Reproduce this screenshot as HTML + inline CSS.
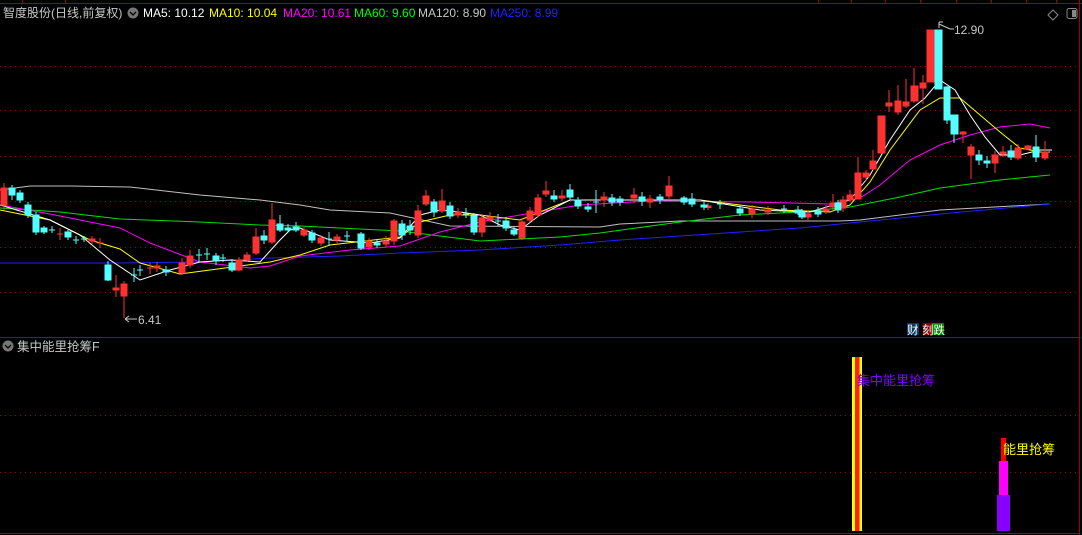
<!DOCTYPE html>
<html><head><meta charset="utf-8"><style>
html,body{margin:0;padding:0;background:#000;width:1082px;height:535px;overflow:hidden}
svg{display:block}
text{font-family:"Liberation Sans","Noto Sans CJK SC",sans-serif}
</style></head><body>
<svg width="1082" height="535" viewBox="0 0 1082 535" xmlns="http://www.w3.org/2000/svg">
<g stroke="#a00000" stroke-width="1" fill="none">
<line x1="0" y1="3.5" x2="1082" y2="3.5"/>
<line x1="1079.5" y1="0" x2="1079.5" y2="535"/>
<line x1="0" y1="337.5" x2="1080" y2="337.5"/>
<line x1="0" y1="533.5" x2="1080" y2="533.5"/>
<line x1="22.5" y1="0" x2="22.5" y2="3"/><line x1="65.5" y1="0" x2="65.5" y2="3"/>
<line x1="818.5" y1="0" x2="818.5" y2="3"/><line x1="851.5" y1="0" x2="851.5" y2="3"/><line x1="885.5" y1="0" x2="885.5" y2="3"/><line x1="920.5" y1="0" x2="920.5" y2="3"/><line x1="956.5" y1="0" x2="956.5" y2="3"/><line x1="991.5" y1="0" x2="991.5" y2="3"/><line x1="1026.5" y1="0" x2="1026.5" y2="3"/><line x1="1056.5" y1="0" x2="1056.5" y2="3"/>
</g>
<g stroke="#a00000" stroke-width="1" stroke-dasharray="1,4" fill="none">
<line x1="0" y1="66.5" x2="1078" y2="66.5"/>
<line x1="0" y1="110.5" x2="1078" y2="110.5"/>
<line x1="0" y1="156.5" x2="1078" y2="156.5"/>
<line x1="0" y1="201.5" x2="1078" y2="201.5"/>
<line x1="0" y1="247.5" x2="1078" y2="247.5"/>
<line x1="0" y1="292.5" x2="1078" y2="292.5"/>
<line x1="0" y1="415.5" x2="1078" y2="415.5"/>
<line x1="0" y1="472.5" x2="1078" y2="472.5"/>
</g>
<!-- header -->
<text x="3" y="17" font-size="12" fill="#c8c8c8">智度股份(日线,前复权)</text>
<circle cx="133" cy="13" r="5.5" fill="#777"/>
<path d="M130 12 L133 15 L136 12" stroke="#000" stroke-width="1.3" fill="none"/>
<text x="143" y="17" font-size="12" fill="#fff">MA5: 10.12</text>
<text x="209" y="17" font-size="12" fill="#ffff00">MA10: 10.04</text>
<text x="283" y="17" font-size="12" fill="#ff00ff">MA20: 10.61</text>
<text x="354" y="17" font-size="12" fill="#00ff00">MA60: 9.60</text>
<text x="418" y="17" font-size="12" fill="#c8c8c8">MA120: 8.90</text>
<text x="490" y="17" font-size="12" fill="#2020ff">MA250: 8.99</text>
<path d="M1053 10 L1058 15 L1053 20 L1048 15 Z" stroke="#888" fill="none"/>
<rect x="1067" y="8.5" width="10" height="10" rx="2" stroke="#888" fill="none"/>
<rect x="1072" y="10" width="4" height="7" fill="#888"/>
<!-- MA lines -->
<g fill="none" stroke-width="1">
<polyline stroke="#c0c0c0" points="0,190 30,186 70,186 130,187 200,195 260,200 300,205 330,210 390,213 450,226 600,227 620,224 680,221 840,221 860,220 940,210 1050,204"/>
<polyline stroke="#2020ff" points="0,263 120,263 200,262 270,258 340,256 400,253 480,250 560,245 620,240 680,236 800,228 860,222 940,214 1050,204"/>
<polyline stroke="#00e000" points="0,208 60,212 120,219 200,222 260,225 300,226 400,231 480,241 560,237 600,233 680,222 740,215 800,212 850,207 900,197 940,188 1000,180 1050,175"/>
<polyline stroke="#ff00ff" points="0,205 50,214 120,228 150,243 200,262 250,268 270,266 300,256 350,250 400,246 440,232 480,222 520,215 580,205 650,201 750,202 830,204 860,198 880,185 910,160 940,145 970,135 1000,127 1030,124 1050,128"/>
<polyline stroke="#ffff00" points="0,210 50,220 90,240 120,249 140,263 180,274 210,270 240,266 270,262 300,255 330,245 400,237 420,222 450,215 480,215 520,220 570,200 650,200 700,200 780,210 830,212 850,205 870,182 890,150 920,110 940,98 960,98 980,115 1000,132 1020,148 1040,152 1050,152"/>
<polyline stroke="#ffffff" points="0,205 50,220 80,235 110,260 140,280 170,270 200,262 230,260 260,262 280,240 290,230 300,228 330,240 370,243 400,238 420,215 440,210 460,212 480,215 500,225 520,230 540,215 570,200 620,200 700,200 760,210 810,212 850,200 870,175 890,140 910,110 925,98 940,80 955,90 970,115 985,137 1000,155 1020,155 1040,150 1052,150"/>
</g>
<!-- candles -->
<g fill="#ff3232" stroke="#ff3232" stroke-width="1">
<line x1="4" y1="183" x2="4" y2="210"/><rect x="1" y="188" width="6" height="17"/>
<line x1="60" y1="228" x2="60" y2="240"/><line x1="57" y1="234" x2="63" y2="234"/>
<line x1="92" y1="236" x2="92" y2="244"/><rect x="89" y="239" width="6" height="2"/>
<line x1="100" y1="238" x2="100" y2="248"/><line x1="97" y1="243" x2="103" y2="243"/>
<line x1="116" y1="275" x2="116" y2="297"/><rect x="113" y="288" width="6" height="2"/>
<line x1="124" y1="281" x2="124" y2="318"/><rect x="121" y="284" width="6" height="12"/>
<line x1="150" y1="263" x2="150" y2="274"/><line x1="147" y1="268" x2="153" y2="268"/>
<line x1="157" y1="262" x2="157" y2="272"/><rect x="154" y="266" width="6" height="2"/>
<line x1="182" y1="258" x2="182" y2="275"/><rect x="179" y="263" width="6" height="10"/>
<line x1="190" y1="250" x2="190" y2="268"/><rect x="187" y="256" width="6" height="9"/>
<line x1="239" y1="257" x2="239" y2="271"/><rect x="236" y="260" width="6" height="10"/>
<line x1="247" y1="252" x2="247" y2="262"/><rect x="244" y="255" width="6" height="5"/>
<line x1="256" y1="228" x2="256" y2="255"/><rect x="253" y="237" width="6" height="16"/>
<line x1="272" y1="203" x2="272" y2="244"/><rect x="269" y="220" width="6" height="22"/>
<line x1="304" y1="227" x2="304" y2="237"/><rect x="301" y="230" width="6" height="5"/>
<line x1="321" y1="235" x2="321" y2="246"/><rect x="318" y="238" width="6" height="5"/>
<line x1="337" y1="234" x2="337" y2="243"/><rect x="334" y="237" width="6" height="3"/>
<line x1="369" y1="238" x2="369" y2="250"/><rect x="366" y="241" width="6" height="6"/>
<line x1="386" y1="236" x2="386" y2="247"/><rect x="383" y="241" width="6" height="3"/>
<line x1="394" y1="219" x2="394" y2="245"/><rect x="391" y="221" width="6" height="20"/>
<line x1="418" y1="205" x2="418" y2="238"/><rect x="415" y="211" width="6" height="24"/>
<line x1="426" y1="190" x2="426" y2="206"/><rect x="423" y="196" width="6" height="8"/>
<line x1="442" y1="189" x2="442" y2="213"/><rect x="439" y="201" width="6" height="10"/>
<line x1="458" y1="208" x2="458" y2="218"/><rect x="455" y="212" width="6" height="3"/>
<line x1="482" y1="214" x2="482" y2="237"/><rect x="479" y="218" width="6" height="14"/>
<line x1="490" y1="212" x2="490" y2="222"/><rect x="487" y="217" width="6" height="3"/>
<line x1="522" y1="218" x2="522" y2="240"/><rect x="519" y="222" width="6" height="16"/>
<line x1="530" y1="207" x2="530" y2="222"/><rect x="527" y="211" width="6" height="9"/>
<line x1="538" y1="194" x2="538" y2="217"/><rect x="535" y="198" width="6" height="17"/>
<line x1="546" y1="181" x2="546" y2="197"/><rect x="543" y="191" width="6" height="3"/>
<line x1="562" y1="190" x2="562" y2="201"/><rect x="559" y="196" width="6" height="2"/>
<line x1="604" y1="192" x2="604" y2="207"/><rect x="601" y="197" width="6" height="3"/>
<line x1="634" y1="188" x2="634" y2="203"/><rect x="631" y="195" width="6" height="3"/>
<line x1="650" y1="195" x2="650" y2="208"/><rect x="647" y="199" width="6" height="3"/>
<line x1="669" y1="176" x2="669" y2="200"/><rect x="666" y="186" width="6" height="10"/>
<line x1="708" y1="203" x2="708" y2="210"/><rect x="705" y="206" width="6" height="1.5"/>
<line x1="752" y1="205" x2="752" y2="218"/><rect x="749" y="209" width="6" height="5"/>
<line x1="768" y1="206" x2="768" y2="215"/><rect x="765" y="210" width="6" height="2"/>
<line x1="808" y1="210" x2="808" y2="221"/><rect x="805" y="214" width="6" height="3"/>
<line x1="826" y1="205" x2="826" y2="214"/><rect x="823" y="209" width="6" height="2"/>
<line x1="833" y1="194" x2="833" y2="210"/><rect x="830" y="203" width="6" height="4"/>
<line x1="843" y1="196" x2="843" y2="212"/><rect x="840" y="200" width="6" height="8"/>
<line x1="850" y1="190" x2="850" y2="202"/><rect x="847" y="195" width="6" height="5"/>
<line x1="858" y1="157" x2="858" y2="199"/><rect x="855" y="173" width="6" height="26"/>
<line x1="866" y1="170" x2="866" y2="181"/><rect x="863" y="173" width="6" height="4"/>
<line x1="873" y1="150" x2="873" y2="170"/><rect x="870" y="161" width="6" height="8"/>
<rect x="878" y="116" width="7" height="37"/>
<line x1="889" y1="90" x2="889" y2="112"/><rect x="886" y="103" width="6" height="3"/>
<line x1="898" y1="85" x2="898" y2="115"/><rect x="895" y="101" width="6" height="11"/>
<line x1="906" y1="79" x2="906" y2="108"/><rect x="903" y="102" width="6" height="4"/>
<line x1="914" y1="68" x2="914" y2="103"/><rect x="911" y="86" width="7" height="15"/>
<line x1="923" y1="75" x2="923" y2="104"/><rect x="920" y="83" width="6" height="5"/>
<rect x="927" y="30" width="7" height="52"/>
<line x1="963" y1="131" x2="963" y2="143"/><rect x="960" y="132" width="6" height="2"/>
<line x1="971" y1="144" x2="971" y2="179"/><rect x="968" y="147" width="6" height="8"/>
<line x1="995" y1="151" x2="995" y2="173"/><rect x="992" y="155" width="6" height="8"/>
<line x1="1003" y1="146" x2="1003" y2="157"/><rect x="1000" y="152" width="6" height="2"/>
<line x1="1018" y1="144" x2="1018" y2="160"/><rect x="1015" y="148" width="6" height="10"/>
<line x1="1028" y1="145" x2="1028" y2="150"/><rect x="1025" y="146" width="6" height="3"/>
<line x1="1045" y1="141" x2="1045" y2="160"/><rect x="1042" y="152" width="6" height="6"/>
</g>
<g fill="#54ffff" stroke="#54ffff" stroke-width="1">
<line x1="12" y1="185" x2="12" y2="200"/><rect x="9" y="188" width="6" height="7"/>
<line x1="20" y1="190" x2="20" y2="203"/><rect x="17" y="193" width="6" height="7"/>
<line x1="28" y1="202" x2="28" y2="218"/><rect x="25" y="205" width="6" height="10"/>
<line x1="36" y1="212" x2="36" y2="235"/><rect x="33" y="215" width="6" height="17"/>
<line x1="44" y1="226" x2="44" y2="234"/><rect x="41" y="228" width="6" height="4"/>
<line x1="52" y1="226" x2="52" y2="233"/><line x1="49" y1="230" x2="55" y2="230"/>
<line x1="68" y1="230" x2="68" y2="240"/><rect x="65" y="232" width="6" height="5"/>
<line x1="76" y1="236" x2="76" y2="244"/><line x1="73" y1="240" x2="79" y2="240"/>
<line x1="84" y1="236" x2="84" y2="242"/><line x1="81" y1="239" x2="87" y2="239"/>
<line x1="108" y1="261" x2="108" y2="281"/><rect x="105" y="265" width="6" height="15"/>
<line x1="134" y1="268" x2="134" y2="282"/><line x1="131" y1="275" x2="137" y2="275"/>
<line x1="140" y1="265" x2="140" y2="276"/><line x1="137" y1="270" x2="143" y2="270"/>
<line x1="166" y1="266" x2="166" y2="276"/><rect x="163" y="270" width="6" height="2"/>
<line x1="199" y1="249" x2="199" y2="262"/><line x1="196" y1="255" x2="202" y2="255"/>
<line x1="207" y1="248" x2="207" y2="260"/><line x1="204" y1="254" x2="210" y2="254"/>
<line x1="216" y1="253" x2="216" y2="265"/><rect x="213" y="256" width="6" height="5"/>
<line x1="223" y1="254" x2="223" y2="262"/><line x1="220" y1="258" x2="226" y2="258"/>
<line x1="232" y1="259" x2="232" y2="272"/><rect x="229" y="263" width="6" height="7"/>
<line x1="264" y1="230" x2="264" y2="244"/><rect x="261" y="236" width="6" height="4"/>
<line x1="280" y1="215" x2="280" y2="232"/><rect x="277" y="224" width="6" height="6"/>
<line x1="288" y1="224" x2="288" y2="232"/><rect x="285" y="228" width="6" height="2"/>
<line x1="296" y1="222" x2="296" y2="232"/><rect x="293" y="227" width="6" height="3"/>
<line x1="312" y1="230" x2="312" y2="243"/><rect x="309" y="233" width="6" height="7"/>
<line x1="329" y1="232" x2="329" y2="246"/><line x1="326" y1="239" x2="332" y2="239"/>
<line x1="347" y1="231" x2="347" y2="241"/><line x1="344" y1="236" x2="350" y2="236"/>
<line x1="361" y1="232" x2="361" y2="250"/><rect x="358" y="234" width="6" height="14"/>
<line x1="377" y1="240" x2="377" y2="248"/><rect x="374" y="243" width="6" height="2"/>
<line x1="402" y1="220" x2="402" y2="240"/><rect x="399" y="224" width="6" height="11"/>
<line x1="410" y1="220" x2="410" y2="235"/><rect x="407" y="226" width="6" height="4"/>
<line x1="434" y1="199" x2="434" y2="217"/><rect x="431" y="202" width="6" height="10"/>
<line x1="450" y1="202" x2="450" y2="219"/><rect x="447" y="206" width="6" height="10"/>
<line x1="466" y1="208" x2="466" y2="218"/><line x1="463" y1="214" x2="469" y2="214"/>
<line x1="474" y1="213" x2="474" y2="235"/><rect x="471" y="216" width="6" height="16"/>
<line x1="498" y1="214" x2="498" y2="226"/><line x1="495" y1="221" x2="501" y2="221"/>
<line x1="506" y1="217" x2="506" y2="231"/><rect x="503" y="221" width="6" height="7"/>
<line x1="514" y1="227" x2="514" y2="236"/><rect x="511" y="230" width="6" height="4"/>
<line x1="554" y1="190" x2="554" y2="202"/><rect x="551" y="196" width="6" height="3"/>
<line x1="570" y1="184" x2="570" y2="200"/><rect x="567" y="190" width="6" height="7"/>
<line x1="578" y1="197" x2="578" y2="209"/><rect x="575" y="200" width="6" height="6"/>
<line x1="588" y1="203" x2="588" y2="212"/><rect x="585" y="207" width="6" height="2"/>
<line x1="596" y1="190" x2="596" y2="213"/><line x1="593" y1="202" x2="599" y2="202"/>
<line x1="612" y1="194" x2="612" y2="206"/><rect x="609" y="198" width="6" height="4"/>
<line x1="620" y1="196" x2="620" y2="206"/><rect x="617" y="199" width="6" height="3"/>
<line x1="642" y1="192" x2="642" y2="206"/><rect x="639" y="197" width="6" height="4"/>
<line x1="660" y1="194" x2="660" y2="204"/><rect x="657" y="197" width="6" height="3"/>
<line x1="684" y1="196" x2="684" y2="205"/><rect x="681" y="198" width="6" height="4"/>
<line x1="692" y1="193" x2="692" y2="207"/><rect x="689" y="199" width="6" height="5"/>
<line x1="704" y1="201" x2="704" y2="210"/><rect x="701" y="205" width="6" height="2"/>
<line x1="720" y1="200" x2="720" y2="209"/><line x1="717" y1="204" x2="723" y2="204"/>
<line x1="740" y1="205" x2="740" y2="216"/><rect x="737" y="209" width="6" height="4"/>
<line x1="784" y1="205" x2="784" y2="213"/><line x1="781" y1="209" x2="787" y2="209"/>
<line x1="798" y1="206" x2="798" y2="215"/><rect x="795" y="210" width="6" height="3"/>
<line x1="802" y1="209" x2="802" y2="219"/><rect x="799" y="212" width="6" height="5"/>
<line x1="818" y1="207" x2="818" y2="217"/><rect x="815" y="211" width="6" height="3"/>
<line x1="838" y1="200" x2="838" y2="213"/><rect x="835" y="203" width="6" height="7"/>
<rect x="935" y="30" width="7" height="59"/>
<line x1="947" y1="86" x2="947" y2="124"/><rect x="944" y="87" width="6" height="33"/>
<line x1="954" y1="115" x2="954" y2="143"/><rect x="951" y="115" width="7" height="19"/>
<line x1="979" y1="150" x2="979" y2="165"/><rect x="976" y="155" width="6" height="5"/>
<line x1="987" y1="156" x2="987" y2="168"/><rect x="984" y="161" width="6" height="2"/>
<line x1="1011" y1="145" x2="1011" y2="160"/><rect x="1008" y="151" width="6" height="6"/>
<line x1="1036" y1="135" x2="1036" y2="162"/><rect x="1033" y="147" width="6" height="10"/>
</g>
<!-- extreme labels -->
<path d="M939 22 L939 28 M939 22 L943 22 M939 24 L950 29 L954 29" stroke="#c8c8c8" fill="none"/>
<text x="954" y="34" font-size="12" fill="#c8c8c8">12.90</text>
<path d="M125 319 L137 319 M125 319 L129 316 M125 319 L129 322" stroke="#c8c8c8" fill="none"/>
<text x="138" y="324" font-size="12" fill="#c8c8c8">6.41</text>
<rect x="907" y="323" width="12" height="12" fill="#0a3a6a"/>
<text x="907" y="334" font-size="11.5" fill="#fff">财</text>
<rect x="923" y="323" width="9" height="12" fill="#8a0000"/>
<rect x="932" y="323" width="12" height="12" fill="#008a00"/>
<text x="922" y="334" font-size="11.5" fill="#fff">刻跌</text>
<!-- lower panel -->
<circle cx="8" cy="346" r="5.5" fill="#777"/>
<path d="M5 345 L8 348 L11 345" stroke="#000" stroke-width="1.3" fill="none"/>
<text x="17" y="351" font-size="12.5" fill="#c8c8c8">集中能里抢筹F</text>
<rect x="852" y="357" width="10" height="174" fill="#ffff00"/>
<rect x="855" y="357" width="4.5" height="174" fill="#ff2020"/>
<text x="857" y="385" font-size="13" fill="#8000ff">集中能里抢筹</text>
<rect x="997" y="495" width="13" height="36" fill="#8800ff"/>
<rect x="999" y="461" width="9" height="34" fill="#ff00ff"/>
<rect x="1001" y="438" width="5" height="23" fill="#ff0000"/>
<text x="1003" y="454" font-size="13" fill="#ffff00">能里抢筹</text>
</svg>
</body></html>
